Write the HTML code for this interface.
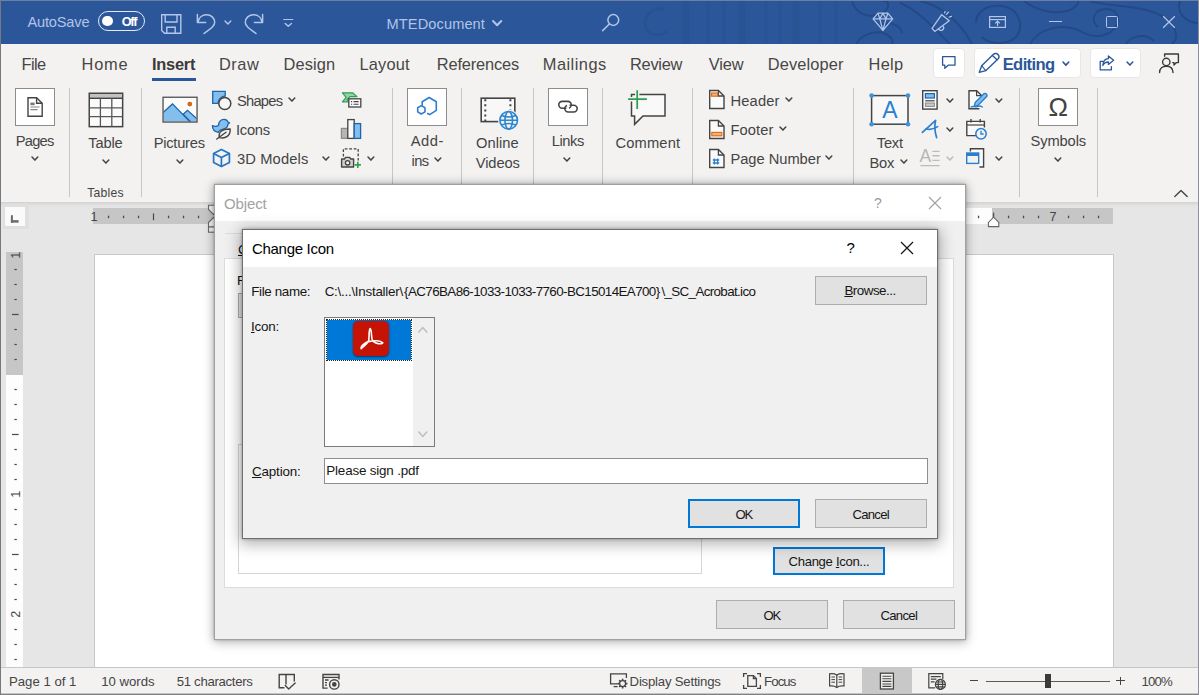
<!DOCTYPE html>
<html lang="en"><head><meta charset="utf-8"><title>MTEDocument - Word</title>
<style>
html,body{margin:0;padding:0;}
body{width:1199px;height:695px;overflow:hidden;position:relative;background:#e6e6e6;font-family:"Liberation Sans", sans-serif;}
#w{position:absolute;left:0;top:0;width:1199px;height:695px;overflow:hidden;}
#w div,#w span,#w svg{position:absolute;box-sizing:border-box;}
#w span{white-space:pre;line-height:1;}
#w svg{overflow:visible;}
u{text-decoration:underline;text-underline-offset:1px;}
</style></head>
<body><div id="w">
<div style="left:0px;top:0px;width:1199px;height:695px;background:#e6e6e6;"></div>
<div style="left:0px;top:0px;width:1199px;height:44px;background:#2b579a;"></div>
<div style="left:0px;top:44px;width:1199px;height:158px;background:#f3f2f1;"></div>
<div style="left:0px;top:202px;width:1199px;height:6px;background:linear-gradient(#d2d2d2,#e1e1e1 50%,#e6e6e6);"></div>
<svg style="left:620px;top:1px;overflow:hidden;" width="579" height="43" viewBox="0 0 579 43"><g fill="none" stroke="#254e8c" stroke-width="2.4" opacity="0.6">
<path d="M44 8 C30 6 22 18 26 27 C30 36 42 35 47 30"/>
</g>
<g fill="none" stroke="#254e8c" opacity="0.38">
<path d="M66 0 V43 M122 0 V43 M176 0 V43" stroke-width="7"/>
<path d="M88 0 V43 M104 0 V43 M146 0 V43 M160 0 V43 M200 0 V43 M216 0 V43" stroke-width="3"/>
</g>
<g fill="none" stroke="#234a86" stroke-width="2" opacity="0.95">
<path d="M232 0 C236 14 250 18 262 12 C272 6 268 -2 262 0"/>
<path d="M236 43 C244 30 262 28 270 36 C276 42 270 46 266 43"/>
<path d="M280 2 C300 10 316 30 330 43"/>
<path d="M300 0 C320 4 340 20 352 43"/>
<path d="M356 22 C356 8 372 2 386 6 C400 10 404 26 396 36 C388 44 370 44 362 36"/>
<path d="M404 0 C420 12 440 14 452 8 C462 2 458 -4 450 0"/>
<path d="M410 43 C420 26 444 22 460 30 C474 38 486 36 494 28 C502 20 498 8 486 8 C474 8 470 20 478 26"/>
<path d="M470 0 C490 6 520 4 540 14 C556 22 560 36 552 43"/>
<path d="M506 43 C512 34 526 32 534 40"/>
<path d="M560 0 C556 12 566 22 579 22"/>
<path d="M262 24 C270 20 280 24 282 32"/>
</g></svg>
<span id="t1" style="left:27.40px;top:15.00px;font-size:14.6px;color:#b1c4e7;font-weight:400;letter-spacing:-0.167px;">AutoSave</span>
<div style="left:98px;top:11px;width:47px;height:20px;border:1.6px solid #e4eaf5;border-radius:10px;"></div>
<div style="left:102.4px;top:15.6px;width:10.599999999999994px;height:10.4px;background:#fff;border-radius:50%;"></div>
<span id="t2" style="left:121.70px;top:16.00px;font-size:12.7px;color:#fff;font-weight:700;letter-spacing:-1.300px;">Off</span>
<svg style="left:160px;top:13px;" width="22" height="22" viewBox="0 0 22 22"><g fill="none" stroke="#b3c6e9" stroke-width="1.4" stroke-linejoin="miter"><path d="M1.7 1.7 H17 L20.8 1.7 V20.3 H4.5 L1.7 17.5 Z"/><path d="M5.2 1.7 V9 H17 V1.7"/><path d="M6.8 20.3 V14.2 H15.2 V20.3"/></g></svg>
<svg style="left:196px;top:13px;" width="20" height="22" viewBox="0 0 20 22"><g fill="none" stroke="#b3c6e9" stroke-width="1.5" stroke-linecap="round" stroke-linejoin="round"><path d="M1.4 1.6 V9.4 H9.6"/><path d="M2 9.2 C2.6 4.6 6.2 1.7 10.5 1.7 C15 1.7 18.7 5 18.7 9.3 C18.7 12.8 15.5 15 8 20.5"/></g></svg>
<svg style="left:222.5px;top:18.65px;" width="9.8" height="7.1" viewBox="0 0 9.8 7.1"><path d="M2 2 L4.9 5.1 L7.8 2" fill="none" stroke="#b3c6e9" stroke-width="1.4" stroke-linecap="round" stroke-linejoin="round"/></svg>
<svg style="left:244px;top:13px;" width="20" height="22" viewBox="0 0 20 22"><g fill="none" stroke="#b3c6e9" stroke-width="1.5" stroke-linecap="round" stroke-linejoin="round" transform="translate(20,0) scale(-1,1)"><path d="M1.4 1.6 V9.4 H9.6"/><path d="M2 9.2 C2.6 4.6 6.2 1.7 10.5 1.7 C15 1.7 18.7 5 18.7 9.3 C18.7 12.8 15.5 15 8 20.5"/></g></svg>
<svg style="left:282px;top:17px;" width="13" height="11" viewBox="0 0 13 11"><g fill="none" stroke="#b3c6e9" stroke-linecap="round" stroke-linejoin="round"><path d="M1.8 2.5 H10.8" stroke-width="1.2"/><path d="M3.2 6.4 L6.3 9.3 L9.4 6.4" stroke-width="1.4"/></g></svg>
<span id="t3" style="left:386.60px;top:17.00px;font-size:14.6px;color:#b1c4e7;font-weight:400;letter-spacing:0.094px;">MTEDocument</span>
<svg style="left:491.25px;top:18.8px;" width="12.3" height="8.2" viewBox="0 0 12.3 8.2"><path d="M2 2 L6.15 6.2 L10.3 2" fill="none" stroke="#b3c6e9" stroke-width="2" stroke-linecap="round" stroke-linejoin="round"/></svg>
<svg style="left:601px;top:13px;" width="20" height="19" viewBox="0 0 20 19"><g fill="none" stroke="#b3c6e9" stroke-width="1.5" stroke-linecap="round"><circle cx="12.3" cy="7" r="5.4"/><path d="M8.4 11 L1.6 17.6"/></g></svg>
<svg style="left:872px;top:12px;" width="22" height="20" viewBox="0 0 22 20"><g fill="none" stroke="#b3c6e9" stroke-width="1.25" stroke-linejoin="round"><path d="M6 1.2 H15.8 L20.7 6.9 L10.9 18.4 L1.1 6.9 Z"/><path d="M1.1 6.9 H20.7"/><path d="M6 1.2 L7.8 6.9 L10.9 18.4 L14 6.9 L15.8 1.2"/><path d="M7.8 6.9 L10.9 1.2 L14 6.9"/></g></svg>
<svg style="left:930px;top:10px;" width="23" height="23" viewBox="0 0 23 23"><g fill="none" stroke="#b3c6e9" stroke-width="1.3" stroke-linecap="round" stroke-linejoin="round"><path d="M2.1 18.3 L11.7 4.7 L19.2 10.7 L4.8 21.4 Z"/><path d="M8.6 18.9 A2.5 2.5 0 0 0 13.4 16.6"/><path d="M16.5 4.4 L18.4 2.2"/><path d="M19.3 7.1 L21.4 6.3"/><path d="M14.6 2.9 L15.1 1.6"/></g></svg>
<svg style="left:988px;top:15px;" width="19" height="14" viewBox="0 0 19 14"><g fill="none" stroke="#b3c6e9" stroke-width="1.2" stroke-linejoin="miter"><rect x="1.6" y="1.6" width="15.8" height="10.8"/><path d="M1.6 4.6 H17.4"/><path d="M9.5 11 V6.4 M7.2 8.4 L9.5 6.2 L11.8 8.4"/></g></svg>
<div style="left:1049px;top:21px;width:12.5px;height:1.3000000000000007px;background:#b3c6e9;"></div>
<div style="left:1106.3px;top:16.4px;width:11.700000000000045px;height:11.8px;border:1.3px solid #b3c6e9;border-radius:1.5px;"></div>
<svg style="left:1162px;top:15px;" width="14" height="14" viewBox="0 0 14 14"><path d="M1.2 1.2 L12.8 12.8 M12.8 1.2 L1.2 12.8" stroke="#b3c6e9" stroke-width="1.3" fill="none"/></svg>
<span id="t4" style="left:21.50px;top:56.00px;font-size:16.4px;color:#484644;font-weight:400;letter-spacing:-0.598px;">File</span>
<span id="t5" style="left:81.50px;top:56.00px;font-size:16.4px;color:#484644;font-weight:400;letter-spacing:0.798px;">Home</span>
<span id="t6" style="left:152.00px;top:56.00px;font-size:16.4px;color:#3b3a39;font-weight:700;letter-spacing:-0.235px;">Insert</span>
<div style="left:152px;top:78px;width:44px;height:3px;background:#2b579a;"></div>
<span id="t7" style="left:219.00px;top:56.00px;font-size:16.4px;color:#484644;font-weight:400;letter-spacing:0.530px;">Draw</span>
<span id="t8" style="left:283.60px;top:56.00px;font-size:16.4px;color:#484644;font-weight:400;letter-spacing:0.099px;">Design</span>
<span id="t9" style="left:359.60px;top:56.00px;font-size:16.4px;color:#484644;font-weight:400;letter-spacing:0.148px;">Layout</span>
<span id="t10" style="left:436.80px;top:56.00px;font-size:16.4px;color:#484644;font-weight:400;letter-spacing:-0.158px;">References</span>
<span id="t11" style="left:542.80px;top:56.00px;font-size:16.4px;color:#484644;font-weight:400;letter-spacing:0.468px;">Mailings</span>
<span id="t12" style="left:630.00px;top:56.00px;font-size:16.4px;color:#484644;font-weight:400;letter-spacing:-0.281px;">Review</span>
<span id="t13" style="left:708.70px;top:56.00px;font-size:16.4px;color:#484644;font-weight:400;letter-spacing:-0.131px;">View</span>
<span id="t14" style="left:767.70px;top:56.00px;font-size:16.4px;color:#484644;font-weight:400;letter-spacing:0.131px;">Developer</span>
<span id="t15" style="left:868.50px;top:56.00px;font-size:16.4px;color:#484644;font-weight:400;letter-spacing:0.302px;">Help</span>
<div style="left:934px;top:49px;width:30px;height:28px;background:#fff;border-radius:3.5px;box-shadow:0 0 0 1px rgba(0,0,0,0.045);"></div>
<div style="left:975px;top:49px;width:105px;height:28px;background:#fff;border-radius:3.5px;box-shadow:0 0 0 1px rgba(0,0,0,0.045);"></div>
<div style="left:1090.5px;top:49px;width:49.5px;height:28px;background:#fff;border-radius:3.5px;box-shadow:0 0 0 1px rgba(0,0,0,0.045);"></div>
<svg style="left:941px;top:55px;" width="16" height="15" viewBox="0 0 16 15"><path d="M1.6 1.6 H14 V10.2 H7.2 L3.8 13.2 V10.2 H1.6 Z" fill="none" stroke="#2b579a" stroke-width="1.3" stroke-linejoin="round"/></svg>
<svg style="left:977px;top:52px;" width="24" height="22" viewBox="0 0 24 22"><g fill="none" stroke="#2b579a" stroke-width="1.35" stroke-linejoin="round" stroke-linecap="round"><path d="M4.7 13.7 L16.2 2.4 C17.6 1.1 19.8 1.2 21 2.5 C22.2 3.8 22.3 5.6 21.2 6.8 L8.7 18.7 L2.3 20.3 Z"/><path d="M15.4 3.4 L20 7.8"/><path d="M4.7 13.7 L8.7 18.7" stroke-width="1.1"/></g></svg>
<span id="t16" style="left:1002.70px;top:57.00px;font-size:16.6px;color:#2b579a;font-weight:700;letter-spacing:-0.631px;">Editing</span>
<svg style="left:1060.6px;top:60.45px;" width="9.8" height="7.1" viewBox="0 0 9.8 7.1"><path d="M2 2 L4.9 5.1 L7.8 2" fill="none" stroke="#2b579a" stroke-width="1.6" stroke-linecap="round" stroke-linejoin="round"/></svg>
<svg style="left:1098px;top:54px;" width="18" height="18" viewBox="0 0 18 18"><g fill="none" stroke="#2b579a" stroke-width="1.3" stroke-linejoin="round" stroke-linecap="round"><path d="M5 7.4 H2.2 V15.8 H13.4 V12.6"/><path d="M10.4 2 L15.6 6.2 L10.4 10.4 V8 C7.6 8 5.8 9.4 4.8 11.6 C5 7.6 7 4.8 10.4 4.6 Z"/></g></svg>
<svg style="left:1125.1px;top:60.45px;" width="9.8" height="7.1" viewBox="0 0 9.8 7.1"><path d="M2 2 L4.9 5.1 L7.8 2" fill="none" stroke="#2b579a" stroke-width="1.5" stroke-linecap="round" stroke-linejoin="round"/></svg>
<svg style="left:1158px;top:52px;" width="23" height="23" viewBox="0 0 23 23"><g fill="none" stroke="#3b3a39" stroke-width="1.4" stroke-linejoin="round" stroke-linecap="round"><circle cx="8.3" cy="10" r="3.7"/><path d="M1.6 20.6 C1.6 16.2 4.4 14.2 8.3 14.2 C12.2 14.2 15 16.2 15 20.6"/><path d="M6.6 4.2 V2 H20.4 V10.6 H18.4 L16 13 V10.6 H14.8"/></g></svg>
<div style="left:69.0px;top:88px;width:1.0px;height:109px;background:#c8c6c4;"></div>
<div style="left:141.0px;top:88px;width:1.0px;height:109px;background:#c8c6c4;"></div>
<div style="left:392.2px;top:88px;width:1.0px;height:109px;background:#c8c6c4;"></div>
<div style="left:461.1px;top:88px;width:1.0px;height:109px;background:#c8c6c4;"></div>
<div style="left:533.0px;top:88px;width:1.0px;height:109px;background:#c8c6c4;"></div>
<div style="left:601.9px;top:88px;width:1.0px;height:109px;background:#c8c6c4;"></div>
<div style="left:692.0px;top:88px;width:1.0px;height:109px;background:#c8c6c4;"></div>
<div style="left:852.8px;top:88px;width:1.0px;height:109px;background:#c8c6c4;"></div>
<div style="left:1019.2px;top:88px;width:1.0px;height:109px;background:#c8c6c4;"></div>
<div style="left:1097.0px;top:88px;width:1.0px;height:109px;background:#c8c6c4;"></div>
<div style="left:15px;top:88px;width:40px;height:38px;background:#fff;border:1px solid #8c8c8c;"></div>
<svg style="left:26px;top:96px;" width="18" height="22" viewBox="0 0 18 22"><g fill="none" stroke="#444" stroke-width="1.4" stroke-linejoin="miter"><path d="M2 1.7 H10.6 L16.2 7.2 V20.3 H2 Z"/><path d="M10.6 1.7 V7.2 H16.2"/></g><rect x="4.4" y="6.6" width="4.2" height="2.6" fill="#777"/><path d="M4.4 11 H13.6 M4.4 13.6 H11.6" stroke="#888" stroke-width="1.2"/></svg>
<span id="t17" style="left:15.80px;top:134.00px;font-size:14.7px;color:#444;font-weight:400;letter-spacing:-0.775px;">Pages</span>
<svg style="left:29.5px;top:155.45px;" width="9.8" height="7.1" viewBox="0 0 9.8 7.1"><path d="M2 2 L4.9 5.1 L7.8 2" fill="none" stroke="#444" stroke-width="1.5" stroke-linecap="round" stroke-linejoin="round"/></svg>
<svg style="left:88px;top:92px;" width="37" height="36" viewBox="0 0 37 36"><rect x="1.25" y="1.25" width="33.4" height="33.4" fill="#fbfbfb" stroke="#444" stroke-width="1.5"/><rect x="2" y="2" width="31.9" height="3.6" fill="#c2c2c2"/><path d="M1.2 6.2 H34.6" stroke="#444" stroke-width="1.4"/><path d="M12.4 6.2 V34.6 M23.8 6.2 V34.6 M1.2 15.9 H34.6 M1.2 24.6 H34.6" stroke="#585858" stroke-width="1.3"/></svg>
<span id="t18" style="left:88.30px;top:136.00px;font-size:14.7px;color:#444;font-weight:400;letter-spacing:-0.161px;">Table</span>
<svg style="left:100.6px;top:158.05px;" width="9.8" height="7.1" viewBox="0 0 9.8 7.1"><path d="M2 2 L4.9 5.1 L7.8 2" fill="none" stroke="#444" stroke-width="1.5" stroke-linecap="round" stroke-linejoin="round"/></svg>
<span id="t19" style="left:87.30px;top:187.00px;font-size:12.2px;color:#444;font-weight:400;letter-spacing:0.213px;">Tables</span>
<svg style="left:162px;top:95.5px;" width="36" height="28" viewBox="0 0 36 28"><defs><clipPath id="pc"><rect x="1.6" y="1.8" width="32.9" height="23.7"/></clipPath></defs><rect x="1.05" y="1.25" width="34" height="24.8" fill="#fbfbfb"/><g clip-path="url(#pc)"><path d="M0 17.5 L10.5 7.9 L29 26.8 H0 Z" fill="#83beec" stroke="#1d66ad" stroke-width="1.3"/><path d="M21.2 18.2 L25.5 14.3 L36 23.8 V27 H29.8 Z" fill="#83beec" stroke="#1d66ad" stroke-width="1.3"/></g><circle cx="27.8" cy="8.1" r="2.4" fill="#d9670f"/><rect x="1.05" y="1.25" width="34" height="24.8" fill="none" stroke="#505050" stroke-width="1.3"/></svg>
<span id="t20" style="left:153.70px;top:136.00px;font-size:14.7px;color:#444;font-weight:400;letter-spacing:-0.245px;">Pictures</span>
<svg style="left:174.6px;top:158.05px;" width="9.8" height="7.1" viewBox="0 0 9.8 7.1"><path d="M2 2 L4.9 5.1 L7.8 2" fill="none" stroke="#444" stroke-width="1.5" stroke-linecap="round" stroke-linejoin="round"/></svg>
<svg style="left:211px;top:89.5px;" width="23" height="22" viewBox="0 0 23 22"><path d="M1.7 1.3 H14.2 V6 C9.5 6.6 7 10 7.2 13.4 H1.7 Z" fill="#83beec" stroke="#1d66ad" stroke-width="1.3"/><circle cx="13.8" cy="13.5" r="6" fill="#f6f5f4" stroke="#444" stroke-width="1.5"/></svg>
<span id="t21" style="left:236.90px;top:94.00px;font-size:14.7px;color:#444;font-weight:400;letter-spacing:-0.734px;">Shapes</span>
<svg style="left:286.6px;top:95.85px;" width="9.8" height="7.1" viewBox="0 0 9.8 7.1"><path d="M2 2 L4.9 5.1 L7.8 2" fill="none" stroke="#444" stroke-width="1.5" stroke-linecap="round" stroke-linejoin="round"/></svg>
<svg style="left:211px;top:118px;" width="20" height="22" viewBox="0 0 20 22"><path d="M1.4 7.6 C3.6 8.6 6 8.4 7.6 7.2 C7.6 3.6 10 1.2 13.2 1.4 C15.2 1.6 16.6 2.6 17 4.2 L18.6 4.8 L17 6.2 C16.8 8.6 15.4 10 13.6 10.6 C10.4 11.2 8.2 12.4 7.2 14.4 C3.4 13.8 1.4 11 1.4 7.6 Z" fill="#83beec" stroke="#1d66ad" stroke-width="1.3" stroke-linejoin="round"/><path d="M8.4 19.6 C7 14.2 11 10.8 19.2 11 C19.6 17.6 14.6 21.2 8.4 19.6 Z" fill="#f3f2f1" stroke="#444" stroke-width="1.4" stroke-linejoin="round"/><path d="M5.8 21 L15 14.2" stroke="#444" stroke-width="1.4" stroke-linecap="round"/></svg>
<span id="t22" style="left:236.00px;top:123.00px;font-size:14.7px;color:#444;font-weight:400;letter-spacing:-0.240px;">Icons</span>
<svg style="left:212px;top:148px;" width="19" height="20" viewBox="0 0 19 20"><g fill="none" stroke="#2376c4" stroke-width="1.7" stroke-linejoin="round"><path d="M9.4 1.4 L17.4 5.4 V14.4 L9.4 18.6 L1.6 14.4 V5.4 Z"/><path d="M1.6 5.4 L9.4 9.6 L17.4 5.4 M9.4 9.6 V18.6"/></g></svg>
<span id="t23" style="left:236.90px;top:152.00px;font-size:14.7px;color:#444;font-weight:400;letter-spacing:0.155px;">3D Models</span>
<svg style="left:320.6px;top:154.85px;" width="9.8" height="7.1" viewBox="0 0 9.8 7.1"><path d="M2 2 L4.9 5.1 L7.8 2" fill="none" stroke="#444" stroke-width="1.5" stroke-linecap="round" stroke-linejoin="round"/></svg>
<svg style="left:340px;top:91px;" width="23" height="18" viewBox="0 0 23 18"><path d="M2.4 1.8 H12.6 L17 5.6 H9.8 L7 8.6 L9.2 10.8 H2.4 L6.2 6.3 Z" fill="#93d6a6" stroke="#2f9e55" stroke-width="1.2" stroke-linejoin="round"/><rect x="8.8" y="7.8" width="12" height="8.2" fill="#fafafa" stroke="#444" stroke-width="1.3"/><path d="M11 10.6 H12.2 M13.6 10.6 H18.6 M11 13.2 H12.2 M13.6 13.2 H18.6" stroke="#444" stroke-width="1.1"/></svg>
<svg style="left:340px;top:118px;" width="23" height="22" viewBox="0 0 23 22"><rect x="1.4" y="10.4" width="6.4" height="10" fill="#b5b5b5" stroke="#8a8a8a" stroke-width="1.2"/><rect x="7.8" y="1.6" width="6.4" height="18.8" fill="#fafafa" stroke="#444" stroke-width="1.3"/><rect x="14.2" y="5.6" width="6.4" height="14.8" fill="#83beec" stroke="#1d66ad" stroke-width="1.3"/></svg>
<svg style="left:340px;top:147px;" width="22" height="22" viewBox="0 0 22 22"><path d="M3.4 9.6 V1.9 H18.2 V13.6" fill="none" stroke="#444" stroke-width="1.3" stroke-dasharray="2.8 1.7"/><path d="M1.6 12 H4.4 L5.6 10.4 H9.6 L10.8 12 H13.6 V20 H1.6 Z" fill="#cfcfcf" stroke="#444" stroke-width="1.4" stroke-linejoin="round"/><circle cx="7.6" cy="15.8" r="2.2" fill="#f3f2f1" stroke="#444" stroke-width="1.3"/><path d="M17.8 14.8 V21 M14.7 17.9 H20.9" stroke="#2f9e4e" stroke-width="1.6"/></svg>
<svg style="left:365.6px;top:154.85px;" width="9.8" height="7.1" viewBox="0 0 9.8 7.1"><path d="M2 2 L4.9 5.1 L7.8 2" fill="none" stroke="#444" stroke-width="1.5" stroke-linecap="round" stroke-linejoin="round"/></svg>
<div style="left:407px;top:88px;width:40px;height:38px;background:#fff;border:1px solid #8c8c8c;"></div>
<svg style="left:416px;top:96px;" width="22" height="22" viewBox="0 0 22 22"><g fill="none" stroke="#2b7cd3" stroke-width="1.6" stroke-linejoin="round" stroke-linecap="round"><path d="M6.2 9.2 V5.7 L13.2 1.5 L20.3 5.7 V14.3 L13.7 18.6 L11.6 17.5"/><path d="M5.3 9.6 L9 11.7 V15.9 L5.3 18 L1.7 15.9 V11.7 Z"/></g></svg>
<span id="t24" style="left:410.70px;top:134.00px;font-size:14.7px;color:#444;font-weight:400;letter-spacing:0.589px;">Add-</span>
<span id="t25" style="left:411.60px;top:154.00px;font-size:14.7px;color:#444;font-weight:400;letter-spacing:-0.666px;">ins</span>
<svg style="left:432.6px;top:155.75px;" width="9.8" height="7.1" viewBox="0 0 9.8 7.1"><path d="M2 2 L4.9 5.1 L7.8 2" fill="none" stroke="#444" stroke-width="1.5" stroke-linecap="round" stroke-linejoin="round"/></svg>
<svg style="left:479px;top:96px;" width="40" height="35" viewBox="0 0 40 35"><rect x="2.2" y="2.2" width="33.6" height="23.4" fill="#f8f8f8" stroke="#444" stroke-width="1.6"/><path d="M6.3 3.2 V25" stroke="#444" stroke-width="2" stroke-dasharray="2 3.1"/><path d="M31.4 3.2 V25" stroke="#444" stroke-width="2" stroke-dasharray="2 3.1"/><circle cx="29.7" cy="24.3" r="10.6" fill="#f3f2f1"/><g fill="none" stroke="#2b86d2" stroke-width="1.6"><circle cx="29.7" cy="24.3" r="8.8"/><ellipse cx="29.7" cy="24.3" rx="3.8" ry="8.8"/><path d="M21 24.3 H38.4 M22.6 19.6 C27 21.4 32.4 21.4 36.8 19.6 M22.6 29 C27 27.2 32.4 27.2 36.8 29"/></g></svg>
<span id="t26" style="left:476.00px;top:136.00px;font-size:14.7px;color:#444;font-weight:400;letter-spacing:0.062px;">Online</span>
<span id="t27" style="left:475.80px;top:156.00px;font-size:14.7px;color:#444;font-weight:400;letter-spacing:-0.120px;">Videos</span>
<div style="left:548px;top:88px;width:40px;height:38px;background:#fff;border:1px solid #8c8c8c;"></div>
<svg style="left:557px;top:99px;" width="22" height="15" viewBox="0 0 22 15"><g fill="none" stroke="#444" stroke-width="1.6"><rect x="1.8" y="2.4" width="12.4" height="6.8" rx="3.4"/><rect x="7.8" y="6.2" width="12.4" height="6.8" rx="3.4"/></g><path d="M9.4 9.2 H12" stroke="#fff" stroke-width="2.2"/><path d="M10 6.2 H12.6" stroke="#fff" stroke-width="2.2"/></svg>
<span id="t28" style="left:551.80px;top:134.00px;font-size:14.7px;color:#444;font-weight:400;letter-spacing:-0.436px;">Links</span>
<svg style="left:562.1px;top:155.75px;" width="9.8" height="7.1" viewBox="0 0 9.8 7.1"><path d="M2 2 L4.9 5.1 L7.8 2" fill="none" stroke="#444" stroke-width="1.5" stroke-linecap="round" stroke-linejoin="round"/></svg>
<svg style="left:626px;top:89px;" width="41" height="38" viewBox="0 0 41 38"><path d="M5.5 5.5 H39 V27 H17 L8.6 35.4 V27 H5.5 Z" fill="#f9f9f9" stroke="#444" stroke-width="1.5" stroke-linejoin="miter"/><path d="M11.2 1 V20.2 M1.9 10.2 H21.1" stroke="#f3f2f1" stroke-width="4.4"/><path d="M11.2 1.2 V20 M2.1 10.2 H20.9" stroke="#2f9e4e" stroke-width="1.7"/></svg>
<span id="t29" style="left:615.50px;top:136.00px;font-size:14.7px;color:#444;font-weight:400;letter-spacing:0.153px;">Comment</span>
<svg style="left:708px;top:89.4px;" width="18" height="22" viewBox="0 0 18 22"><path d="M1.7 1.5 H10.4 L16 7 V19.5 H1.7 Z" fill="#fafafa" stroke="#444" stroke-width="1.4"/><path d="M10.4 1.5 V7 H16" fill="none" stroke="#444" stroke-width="1.3"/><rect x="3.6" y="4" width="6" height="3.2" fill="#f4b183" stroke="#e0700f" stroke-width="1.2"/></svg>
<span id="t30" style="left:730.40px;top:94.00px;font-size:14.7px;color:#444;font-weight:400;letter-spacing:0.184px;">Header</span>
<svg style="left:783.5px;top:96.35px;" width="9.8" height="7.1" viewBox="0 0 9.8 7.1"><path d="M2 2 L4.9 5.1 L7.8 2" fill="none" stroke="#444" stroke-width="1.5" stroke-linecap="round" stroke-linejoin="round"/></svg>
<svg style="left:708px;top:118.5px;" width="18" height="22" viewBox="0 0 18 22"><path d="M1.7 1.5 H10.4 L16 7 V19.5 H1.7 Z" fill="#fafafa" stroke="#444" stroke-width="1.4"/><path d="M10.4 1.5 V7 H16" fill="none" stroke="#444" stroke-width="1.3"/><rect x="3.8" y="13.4" width="10" height="3.4" fill="#f4b183" stroke="#e0700f" stroke-width="1.2"/></svg>
<span id="t31" style="left:730.40px;top:123.00px;font-size:14.7px;color:#444;font-weight:400;letter-spacing:0.128px;">Footer</span>
<svg style="left:777.8px;top:125.35px;" width="9.8" height="7.1" viewBox="0 0 9.8 7.1"><path d="M2 2 L4.9 5.1 L7.8 2" fill="none" stroke="#444" stroke-width="1.5" stroke-linecap="round" stroke-linejoin="round"/></svg>
<svg style="left:708px;top:147.7px;" width="18" height="22" viewBox="0 0 18 22"><path d="M1.7 1.5 H10.4 L16 7 V19.5 H1.7 Z" fill="#fafafa" stroke="#444" stroke-width="1.4"/><path d="M10.4 1.5 V7 H16" fill="none" stroke="#444" stroke-width="1.3"/><path d="M6.4 10.4 V16.6 M9.6 10.4 V16.6 M4.8 12 H11.2 M4.8 15 H11.2" stroke="#2a80cf" stroke-width="1.3"/></svg>
<span id="t32" style="left:730.40px;top:152.00px;font-size:14.7px;color:#444;font-weight:400;letter-spacing:-0.023px;">Page Number</span>
<svg style="left:824.4px;top:154.15px;" width="9.8" height="7.1" viewBox="0 0 9.8 7.1"><path d="M2 2 L4.9 5.1 L7.8 2" fill="none" stroke="#444" stroke-width="1.5" stroke-linecap="round" stroke-linejoin="round"/></svg>
<svg style="left:869px;top:92.5px;" width="42" height="34" viewBox="0 0 42 34"><rect x="2.6" y="2.6" width="36.4" height="28.6" fill="#f8f8f8" stroke="#444" stroke-width="1.5"/><g fill="#3a94dc"><circle cx="2.6" cy="2.6" r="2.3"/><circle cx="39" cy="2.6" r="2.3"/><circle cx="2.6" cy="31.2" r="2.3"/><circle cx="39" cy="31.2" r="2.3"/></g><text x="20.8" y="25.4" text-anchor="middle" font-family="Liberation Sans, sans-serif" font-size="23" fill="#2a80cf">A</text></svg>
<span id="t33" style="left:876.80px;top:136.00px;font-size:14.7px;color:#444;font-weight:400;letter-spacing:-0.218px;">Text</span>
<span id="t34" style="left:869.40px;top:156.00px;font-size:14.7px;color:#444;font-weight:400;letter-spacing:-0.182px;">Box</span>
<svg style="left:898.5px;top:158.05px;" width="9.8" height="7.1" viewBox="0 0 9.8 7.1"><path d="M2 2 L4.9 5.1 L7.8 2" fill="none" stroke="#444" stroke-width="1.5" stroke-linecap="round" stroke-linejoin="round"/></svg>
<svg style="left:921px;top:89px;" width="18" height="22" viewBox="0 0 18 22"><rect x="1.7" y="1.7" width="14.4" height="18.4" fill="#fafafa" stroke="#444" stroke-width="1.4"/><rect x="4.4" y="4.6" width="9" height="4.4" fill="#83beec" stroke="#1d66ad" stroke-width="1.2"/><path d="M4.2 11.8 H13.6" stroke="#444" stroke-width="1.2"/><rect x="4.4" y="14" width="9" height="3.4" fill="#c8c8c8" stroke="#8a8a8a" stroke-width="1"/></svg>
<svg style="left:944.5px;top:96.65px;" width="9.8" height="7.1" viewBox="0 0 9.8 7.1"><path d="M2 2 L4.9 5.1 L7.8 2" fill="none" stroke="#444" stroke-width="1.5" stroke-linecap="round" stroke-linejoin="round"/></svg>
<svg style="left:920px;top:118px;" width="22" height="22" viewBox="0 0 22 22"><g fill="none" stroke="#2a80cf" stroke-width="1.7" stroke-linecap="round" stroke-linejoin="round"><path d="M2.4 14.4 L15.6 2.4 C14.4 8 14.8 14 16.6 19.6"/><path d="M6.2 10.8 C9.6 12.2 13.4 11.2 17.6 8.6"/></g></svg>
<svg style="left:944.5px;top:125.65px;" width="9.8" height="7.1" viewBox="0 0 9.8 7.1"><path d="M2 2 L4.9 5.1 L7.8 2" fill="none" stroke="#444" stroke-width="1.5" stroke-linecap="round" stroke-linejoin="round"/></svg>
<svg style="left:919px;top:147px;" width="23" height="21" viewBox="0 0 23 21"><text x="0.4" y="14.6" font-family="Liberation Sans, sans-serif" font-size="17.5" fill="#b8b6b4">A</text><path d="M13.4 4.4 H20.6 M13.4 8.8 H20.6 M13.4 13.4 H20.6 M1.4 18.6 H20.6" stroke="#bebcba" stroke-width="1.4"/></svg>
<svg style="left:944.5px;top:154.55px;" width="9.8" height="7.1" viewBox="0 0 9.8 7.1"><path d="M2 2 L4.9 5.1 L7.8 2" fill="none" stroke="#bcbab8" stroke-width="1.5" stroke-linecap="round" stroke-linejoin="round"/></svg>
<svg style="left:966px;top:88.5px;" width="23" height="23" viewBox="0 0 23 23"><path d="M13.4 19.8 H3 V1.8 H10.6 L15.6 6.6 V8" fill="#fafafa" stroke="#444" stroke-width="1.4" stroke-linejoin="miter"/><path d="M10.6 1.8 V6.6 H15.6" fill="none" stroke="#444" stroke-width="1.2"/><path d="M17.4 5.2 C18.2 4.2 19.6 4.2 20.4 5 C21.2 5.8 21.2 7 20.4 7.8 L11.8 16.4 L8.2 17.4 L9.2 13.6 Z" fill="#83beec" stroke="#2a80cf" stroke-width="1.4" stroke-linejoin="round"/><path d="M5.2 18 C7 16.6 9 18.6 11 17.6 S14.6 17 16.4 18" fill="none" stroke="#2a80cf" stroke-width="1.4" stroke-linecap="round"/></svg>
<svg style="left:993.7px;top:96.65px;" width="9.8" height="7.1" viewBox="0 0 9.8 7.1"><path d="M2 2 L4.9 5.1 L7.8 2" fill="none" stroke="#444" stroke-width="1.5" stroke-linecap="round" stroke-linejoin="round"/></svg>
<svg style="left:965px;top:118px;" width="23" height="23" viewBox="0 0 23 23"><path d="M13 17.6 H1.8 V3.4 H19.4 V9.6" fill="#fafafa" stroke="#444" stroke-width="1.4" stroke-linejoin="miter"/><path d="M1.8 7 H19.4" stroke="#444" stroke-width="1.2"/><path d="M6 1 V4.6 M15.2 1 V4.6" stroke="#444" stroke-width="1.4"/><circle cx="16" cy="15.8" r="5.2" fill="#f3f2f1" stroke="#2a80cf" stroke-width="1.5"/><path d="M16 12.8 V16 H18.6" fill="none" stroke="#2a80cf" stroke-width="1.3"/></svg>
<svg style="left:965px;top:146.5px;" width="21" height="22" viewBox="0 0 21 22"><path d="M5.4 4.6 V1.8 H18.6 V20 H14.4" fill="#fafafa" stroke="#444" stroke-width="1.4" stroke-linejoin="miter"/><rect x="1.7" y="6" width="12" height="10.4" fill="#f3f2f1" stroke="#2a80cf" stroke-width="1.4"/><rect x="1.7" y="6" width="12" height="3" fill="#2a80cf"/></svg>
<svg style="left:993.7px;top:154.55px;" width="9.8" height="7.1" viewBox="0 0 9.8 7.1"><path d="M2 2 L4.9 5.1 L7.8 2" fill="none" stroke="#444" stroke-width="1.5" stroke-linecap="round" stroke-linejoin="round"/></svg>
<div style="left:1038px;top:88px;width:40px;height:38px;background:#fff;border:1px solid #8c8c8c;"></div>
<svg style="left:1046px;top:96px;" width="24" height="22" viewBox="0 0 24 22"><text x="12.1" y="19.7" text-anchor="middle" font-family="Liberation Sans, sans-serif" font-size="26" fill="#444">Ω</text></svg>
<span id="t35" style="left:1030.50px;top:134.00px;font-size:14.7px;color:#444;font-weight:400;letter-spacing:-0.113px;">Symbols</span>
<svg style="left:1052.5px;top:155.75px;" width="9.8" height="7.1" viewBox="0 0 9.8 7.1"><path d="M2 2 L4.9 5.1 L7.8 2" fill="none" stroke="#444" stroke-width="1.5" stroke-linecap="round" stroke-linejoin="round"/></svg>
<svg style="left:1173px;top:189px;" width="16" height="9" viewBox="0 0 16 9"><path d="M1.8 7.4 L8 1.6 L14.2 7.4" fill="none" stroke="#444" stroke-width="1.4" stroke-linecap="round" stroke-linejoin="round"/></svg>
<div style="left:3px;top:204px;width:26px;height:25px;background:#dfdfdf;"></div>
<div style="left:5px;top:207px;width:20px;height:19px;background:#fafafa;"></div>
<svg style="left:10px;top:214px;" width="10" height="10" viewBox="0 0 10 10"><path d="M1.9 1.2 V8.6" fill="none" stroke="#6a6a6a" stroke-width="2"/><path d="M0.9 7.4 H8.6" fill="none" stroke="#6a6a6a" stroke-width="2.5"/></svg>
<div style="left:93px;top:208px;width:1020px;height:15.5px;background:#c6c6c6;"></div>
<div style="left:214px;top:208px;width:777.5px;height:15.5px;background:#fdfdfd;"></div>
<svg style="left:0px;top:208px;" width="1199" height="16" viewBox="0 0 1199 16"><g fill="#4a4a4a"><rect x="107.9" y="7.7" width="1.3" height="2.5"/><rect x="122.9" y="7.7" width="1.3" height="2.5"/><rect x="137.9" y="7.7" width="1.3" height="2.5"/><rect x="152.9" y="5.4" width="1.2" height="6.8"/><rect x="167.9" y="7.7" width="1.3" height="2.5"/><rect x="182.9" y="7.7" width="1.3" height="2.5"/><rect x="197.9" y="7.7" width="1.3" height="2.5"/><rect x="227.9" y="7.7" width="1.3" height="2.5"/><rect x="242.9" y="7.7" width="1.3" height="2.5"/><rect x="257.9" y="7.7" width="1.3" height="2.5"/><rect x="272.9" y="5.4" width="1.2" height="6.8"/><rect x="287.9" y="7.7" width="1.3" height="2.5"/><rect x="302.9" y="7.7" width="1.3" height="2.5"/><rect x="317.9" y="7.7" width="1.3" height="2.5"/><rect x="347.9" y="7.7" width="1.3" height="2.5"/><rect x="362.9" y="7.7" width="1.3" height="2.5"/><rect x="377.9" y="7.7" width="1.3" height="2.5"/><rect x="392.9" y="5.4" width="1.2" height="6.8"/><rect x="407.9" y="7.7" width="1.3" height="2.5"/><rect x="422.9" y="7.7" width="1.3" height="2.5"/><rect x="437.9" y="7.7" width="1.3" height="2.5"/><rect x="467.9" y="7.7" width="1.3" height="2.5"/><rect x="482.9" y="7.7" width="1.3" height="2.5"/><rect x="497.9" y="7.7" width="1.3" height="2.5"/><rect x="512.9" y="5.4" width="1.2" height="6.8"/><rect x="527.9" y="7.7" width="1.3" height="2.5"/><rect x="542.9" y="7.7" width="1.3" height="2.5"/><rect x="557.9" y="7.7" width="1.3" height="2.5"/><rect x="587.9" y="7.7" width="1.3" height="2.5"/><rect x="602.9" y="7.7" width="1.3" height="2.5"/><rect x="617.9" y="7.7" width="1.3" height="2.5"/><rect x="632.9" y="5.4" width="1.2" height="6.8"/><rect x="647.9" y="7.7" width="1.3" height="2.5"/><rect x="662.9" y="7.7" width="1.3" height="2.5"/><rect x="677.9" y="7.7" width="1.3" height="2.5"/><rect x="707.9" y="7.7" width="1.3" height="2.5"/><rect x="722.9" y="7.7" width="1.3" height="2.5"/><rect x="737.9" y="7.7" width="1.3" height="2.5"/><rect x="752.9" y="5.4" width="1.2" height="6.8"/><rect x="767.9" y="7.7" width="1.3" height="2.5"/><rect x="782.9" y="7.7" width="1.3" height="2.5"/><rect x="797.9" y="7.7" width="1.3" height="2.5"/><rect x="827.9" y="7.7" width="1.3" height="2.5"/><rect x="842.9" y="7.7" width="1.3" height="2.5"/><rect x="857.9" y="7.7" width="1.3" height="2.5"/><rect x="872.9" y="5.4" width="1.2" height="6.8"/><rect x="887.9" y="7.7" width="1.3" height="2.5"/><rect x="902.9" y="7.7" width="1.3" height="2.5"/><rect x="917.9" y="7.7" width="1.3" height="2.5"/><rect x="947.9" y="7.7" width="1.3" height="2.5"/><rect x="962.9" y="7.7" width="1.3" height="2.5"/><rect x="977.9" y="7.7" width="1.3" height="2.5"/><rect x="992.9" y="5.4" width="1.2" height="6.8"/><rect x="1007.9" y="7.7" width="1.3" height="2.5"/><rect x="1022.9" y="7.7" width="1.3" height="2.5"/><rect x="1037.9" y="7.7" width="1.3" height="2.5"/><rect x="1067.9" y="7.7" width="1.3" height="2.5"/><rect x="1082.9" y="7.7" width="1.3" height="2.5"/><rect x="1097.9" y="7.7" width="1.3" height="2.5"/></g></svg>
<span id="t36" style="left:90.60px;top:211.00px;font-size:12.6px;color:#444;font-weight:400;letter-spacing:0.000px;">1</span>
<span id="t37" style="left:1049.60px;top:211.00px;font-size:12.6px;color:#444;font-weight:400;letter-spacing:0.000px;">7</span>
<svg style="left:207px;top:204px;" width="13" height="30" viewBox="0 0 13 30"><g fill="#f4f4f4" stroke="#6a6a6a" stroke-width="1.1"><path d="M1.5 1.3 H11.5 V5.5 L6.5 10.5 L1.5 5.5 Z"/><path d="M6.5 13.5 L11.5 18.5 V23 H1.5 V18.5 Z"/><rect x="1.5" y="23" width="10" height="5.2"/></g></svg>
<svg style="left:987px;top:212px;" width="14" height="16" viewBox="0 0 14 16"><path d="M6.6 0.6 V5.2" stroke="#555" stroke-width="1.1"/><path d="M1.4 14.6 V10.4 L6.6 5.2 L11.8 10.4 V14.6 Z" fill="#fcfcfc" stroke="#666" stroke-width="1.1"/></svg>
<div style="left:94px;top:254px;width:1020px;height:414px;background:#fff;border:1px solid #c8c8c8;border-bottom:none;"></div>
<div style="left:6px;top:252px;width:17px;height:123px;background:#c6c6c6;"></div>
<div style="left:6px;top:375px;width:17px;height:292px;background:#fdfdfd;"></div>
<svg style="left:0px;top:0px;" width="30" height="695" viewBox="0 0 30 695"><g fill="#4a4a4a"><rect x="14.4" y="268.9" width="2.4" height="1.2"/><rect x="14.4" y="283.9" width="2.4" height="1.2"/><rect x="14.4" y="298.9" width="2.4" height="1.2"/><rect x="12" y="313.9" width="6.6" height="1.2"/><rect x="14.4" y="328.9" width="2.4" height="1.2"/><rect x="14.4" y="343.9" width="2.4" height="1.2"/><rect x="14.4" y="358.9" width="2.4" height="1.2"/><rect x="14.4" y="388.9" width="2.4" height="1.2"/><rect x="14.4" y="403.9" width="2.4" height="1.2"/><rect x="14.4" y="418.9" width="2.4" height="1.2"/><rect x="12" y="433.9" width="6.6" height="1.2"/><rect x="14.4" y="448.9" width="2.4" height="1.2"/><rect x="14.4" y="463.9" width="2.4" height="1.2"/><rect x="14.4" y="478.9" width="2.4" height="1.2"/><rect x="14.4" y="508.9" width="2.4" height="1.2"/><rect x="14.4" y="523.9" width="2.4" height="1.2"/><rect x="14.4" y="538.9" width="2.4" height="1.2"/><rect x="12" y="553.9" width="6.6" height="1.2"/><rect x="14.4" y="568.9" width="2.4" height="1.2"/><rect x="14.4" y="583.9" width="2.4" height="1.2"/><rect x="14.4" y="598.9" width="2.4" height="1.2"/><rect x="14.4" y="628.9" width="2.4" height="1.2"/><rect x="14.4" y="643.9" width="2.4" height="1.2"/><rect x="14.4" y="658.9" width="2.4" height="1.2"/></g></svg>
<span style="left:9.6px;top:248.5px;width:12.6px;height:12.6px;font-size:12.6px;color:#444;text-align:center;transform:rotate(-90deg);transform-origin:50% 50%;">1</span>
<span style="left:9.6px;top:488.3px;width:12.6px;height:12.6px;font-size:12.6px;color:#444;text-align:center;transform:rotate(-90deg);transform-origin:50% 50%;">1</span>
<span style="left:9.6px;top:608.3000000000001px;width:12.6px;height:12.6px;font-size:12.6px;color:#444;text-align:center;transform:rotate(-90deg);transform-origin:50% 50%;">2</span>
<div style="left:0px;top:0px;width:1px;height:695px;background:#75787d;"></div>
<div style="left:1198px;top:0px;width:1px;height:695px;background:#8d9096;"></div>
<div style="left:0px;top:0px;width:1199px;height:1px;background:#6d7fa3;"></div>
<div style="left:214px;top:184px;width:752px;height:456px;background:#f0f0f0;border:1px solid #a0a0a0;box-shadow:0 2px 10px 1px rgba(0,0,0,0.24),0 -1px 7px rgba(0,0,0,0.12),0 0 2px rgba(0,0,0,0.22);"></div>
<div style="left:215px;top:185px;width:750px;height:36px;background:#fff;"></div>
<span id="t38" style="left:224.00px;top:196.00px;font-size:15px;color:#a2a2a2;font-weight:400;letter-spacing:-0.137px;">Object</span>
<span id="t39" style="left:874.00px;top:196.00px;font-size:14px;color:#9a9a9a;font-weight:400;letter-spacing:0.000px;">?</span>
<svg style="left:928px;top:196px;" width="14" height="14" viewBox="0 0 14 14"><path d="M1 1 L13 13 M13 1 L1 13" stroke="#a0a0a0" stroke-width="1.1" fill="none"/></svg>
<div style="left:225px;top:233px;width:105px;height:1px;background:#dcdcdc;"></div>
<div style="left:224px;top:258px;width:730px;height:330px;background:#fff;border:1px solid #dcdcdc;"></div>
<span id="t40" style="left:238.00px;top:243.00px;font-size:13.4px;color:#111;font-weight:400;letter-spacing:0.000px;"><u>C</u></span>
<span id="t41" style="left:237.00px;top:274.00px;font-size:13.4px;color:#111;font-weight:400;letter-spacing:0.000px;">F</span>
<div style="left:238px;top:293px;width:12px;height:25px;background:#e4e4e4;border:1px solid #adadad;"></div>
<div style="left:238px;top:444px;width:464px;height:130px;border:1px solid #d6d6d6;"></div>
<div style="left:773px;top:547px;width:112px;height:28px;background:#e1e1e1;border:2px solid #0078d7;"></div>
<span id="t42" style="left:788.60px;top:555.00px;font-size:13.1px;color:#161616;font-weight:400;letter-spacing:-0.318px;">Change <u>I</u>con...</span>
<div style="left:716px;top:600px;width:112px;height:29px;background:#e1e1e1;border:1px solid #adadad;"></div>
<span id="t43" style="left:763.50px;top:609.00px;font-size:13.1px;color:#161616;font-weight:400;letter-spacing:-1.300px;">OK</span>
<div style="left:843px;top:600px;width:112px;height:29px;background:#e1e1e1;border:1px solid #adadad;"></div>
<span id="t44" style="left:880.40px;top:609.00px;font-size:13.1px;color:#161616;font-weight:400;letter-spacing:-0.650px;">Cancel</span>
<div style="left:242px;top:229px;width:696px;height:310px;background:#f0f0f0;border:1px solid #6f6f6f;box-shadow:0 3px 14px 2px rgba(0,0,0,0.31),0 0 3px rgba(0,0,0,0.3);"></div>
<div style="left:243px;top:230px;width:694px;height:37px;background:#fff;"></div>
<span id="t45" style="left:252.00px;top:241.00px;font-size:15px;color:#000;font-weight:400;letter-spacing:-0.302px;">Change Icon</span>
<span id="t46" style="left:846.50px;top:240.00px;font-size:15px;color:#000;font-weight:400;letter-spacing:0.000px;">?</span>
<svg style="left:900.4px;top:241px;" width="14" height="14" viewBox="0 0 14 14"><path d="M1 1 L13 13 M13 1 L1 13" stroke="#111" stroke-width="1.2" fill="none"/></svg>
<span id="t47" style="left:251.30px;top:285.00px;font-size:13.4px;color:#161616;font-weight:400;letter-spacing:-0.366px;">File name:</span>
<span style="left:324.70px;top:285.00px;font-size:13.4px;color:#161616;font-weight:400;"><i style="font-style:normal;letter-spacing:-0.261px;margin-left:0.00px">C:\...\Installer\</i><i style="font-style:normal;letter-spacing:-0.605px;margin-left:1.24px">{AC76BA86-1033-1033-7760-BC15014EA700}</i><i style="font-style:normal;letter-spacing:-0.644px;margin-left:1.85px">\_SC_Acrobat.ico</i></span>
<div style="left:815px;top:276px;width:112px;height:29px;background:#e1e1e1;border:1px solid #adadad;"></div>
<span id="t51" style="left:844.40px;top:284.00px;font-size:13.4px;color:#161616;font-weight:400;letter-spacing:-0.499px;"><u>B</u>rowse...</span>
<span id="t52" style="left:251.00px;top:320.00px;font-size:13.4px;color:#161616;font-weight:400;letter-spacing:-0.203px;"><u>I</u>con:</span>
<div style="left:324px;top:317px;width:111px;height:130px;background:#fff;border:1px solid #7a7a7a;"></div>
<div style="left:413px;top:318px;width:21px;height:128px;background:#f0f0f0;"></div>
<div style="left:326px;top:319px;width:86px;height:42px;background:#fff;border:1px dotted #222;"></div>
<div style="left:327px;top:320px;width:84px;height:40px;background:#0078d7;"></div>
<div style="left:352.5px;top:321.3px;width:36.5px;height:34.5px;background:#c51405;border-radius:5.5px;box-shadow:0 0.5px 2px rgba(0,0,20,0.55);"></div>
<svg style="left:352.5px;top:321.5px;" width="36.5" height="34.5" viewBox="0 0 36.5 34.5"><g fill="none" stroke="#fff" stroke-width="1.6" stroke-linecap="round" stroke-linejoin="round"><path d="M17.2 6.6 C15.4 9 16.6 15.4 15.6 18.6 C14.4 22 10.4 24.6 8.2 26.6 C7.4 24.2 11.6 20.6 16.4 19.4 C21 18.2 27.4 18.6 29.8 20.8 C27.6 22.8 22.8 21.6 20 19.2 C17.8 16.8 19.2 9 17.2 6.6 Z"/></g></svg>
<svg style="left:417px;top:326px;" width="12" height="8" viewBox="0 0 12 8"><path d="M1.4 6.4 L5.8 1.6 L10.2 6.4" fill="none" stroke="#bdbdbd" stroke-width="1.5"/></svg>
<svg style="left:417px;top:430px;" width="12" height="8" viewBox="0 0 12 8"><path d="M1.4 1.6 L5.8 6.4 L10.2 1.6" fill="none" stroke="#bdbdbd" stroke-width="1.5"/></svg>
<span id="t53" style="left:252.00px;top:465.00px;font-size:13.4px;color:#161616;font-weight:400;letter-spacing:-0.165px;"><u>C</u>aption:</span>
<div style="left:324px;top:458px;width:604px;height:26px;background:#fff;border:1px solid #8e8e8e;"></div>
<span id="t54" style="left:326.30px;top:464.00px;font-size:13.4px;color:#161616;font-weight:400;letter-spacing:-0.171px;">Please sign .pdf</span>
<div style="left:688px;top:499px;width:112px;height:29px;background:#e1e1e1;border:2px solid #0078d7;"></div>
<span id="t55" style="left:735.60px;top:508.00px;font-size:13.1px;color:#161616;font-weight:400;letter-spacing:-1.300px;">OK</span>
<div style="left:815px;top:499px;width:112px;height:29px;background:#e1e1e1;border:1px solid #adadad;"></div>
<span id="t56" style="left:852.40px;top:508.00px;font-size:13.1px;color:#161616;font-weight:400;letter-spacing:-0.690px;">Cancel</span>
<div style="left:0px;top:667px;width:1199px;height:28px;background:#f3f2f1;border-top:1px solid #c8c6c4;"></div>
<div style="left:0px;top:693px;width:1199px;height:1px;background:#c4c4c4;"></div>
<div style="left:0px;top:694px;width:1199px;height:1px;background:#808080;"></div>
<div style="left:0px;top:0px;width:1px;height:695px;background:#75787d;"></div>
<div style="left:1198px;top:0px;width:1px;height:695px;background:#8d9096;"></div>
<span id="t57" style="left:9.00px;top:675.00px;font-size:13.2px;color:#444;font-weight:400;letter-spacing:-0.012px;">Page 1 of 1</span>
<span id="t58" style="left:101.30px;top:675.00px;font-size:13.2px;color:#444;font-weight:400;letter-spacing:-0.031px;">10 words</span>
<span id="t59" style="left:176.70px;top:675.00px;font-size:13.2px;color:#444;font-weight:400;letter-spacing:-0.309px;">51 characters</span>
<svg style="left:277px;top:672.5px;" width="20" height="18" viewBox="0 0 20 18"><g fill="none" stroke="#444" stroke-width="1.4" stroke-linejoin="miter"><path d="M7.4 14.8 H2.2 V1.5 H17.3 V8.4"/><path d="M9 1.5 V11.6"/><path d="M8.3 12.6 L11.7 15.9 L18.2 10.1" stroke-linecap="round" stroke-linejoin="round"/></g></svg>
<svg style="left:321px;top:672.5px;" width="20" height="18" viewBox="0 0 20 18"><g fill="none" stroke="#444" stroke-width="1.4"><path d="M6.6 15.1 H2 V1.5 H18 V6.4"/><path d="M2 4.4 H18" stroke-width="1.3"/><path d="M4 7 H7.6 M4 9.6 H6 M4 12.2 H6" stroke-width="1.3"/><circle cx="13.3" cy="11.4" r="4.7"/></g><circle cx="13.3" cy="11.4" r="2.3" fill="#444"/></svg>
<svg style="left:608.5px;top:672px;" width="20" height="18" viewBox="0 0 20 18"><g fill="none" stroke="#444" stroke-width="1.3"><path d="M9 11.8 H1.6 V1.8 H17.4 V6"/><path d="M4.6 14.6 H8.6"/><circle cx="13.6" cy="11.6" r="3" /><path d="M13.6 6.8 V8.4 M13.6 14.8 V16.4 M8.8 11.6 H10.4 M16.8 11.6 H18.4 M10.2 8.2 L11.4 9.4 M15.8 13.8 L17 15 M17 8.2 L15.8 9.4 M11.4 13.8 L10.2 15" stroke-width="1.6"/></g></svg>
<span id="t60" style="left:629.60px;top:675.00px;font-size:13.2px;color:#444;font-weight:400;letter-spacing:-0.217px;">Display Settings</span>
<svg style="left:742px;top:671.6px;" width="20" height="18" viewBox="0 0 20 18"><g fill="none" stroke="#444" stroke-width="1.3"><path d="M1.6 5 V1.6 H5 M15 1.6 H18.4 V5 M18.4 13 V16.4 H15 M5 16.4 H1.6 V13"/><path d="M5.8 3.6 H11.4 L14.4 6.6 V14.4 H5.8 Z"/><path d="M11.4 3.6 V6.6 H14.4"/></g></svg>
<span id="t61" style="left:764.00px;top:675.00px;font-size:13.2px;color:#444;font-weight:400;letter-spacing:-0.879px;">Focus</span>
<svg style="left:827.5px;top:671.8px;" width="18" height="17" viewBox="0 0 18 17"><g fill="none" stroke="#444" stroke-width="1.2"><path d="M8.8 3 C6.6 1.6 4 1.4 1.6 1.8 V14 C4 13.6 6.6 13.8 8.8 15.4 C11 13.8 13.6 13.6 16 14 V1.8 C13.6 1.4 11 1.6 8.8 3 Z"/><path d="M8.8 3 V15.2"/><path d="M3.4 5 H7 M3.4 7.6 H7 M3.4 10.2 H7 M10.6 5 H14.2 M10.6 7.6 H14.2 M10.6 10.2 H14.2" stroke-width="1"/></g></svg>
<div style="left:862px;top:668px;width:50px;height:25px;background:#c8c8c8;"></div>
<svg style="left:879px;top:672px;" width="16" height="18" viewBox="0 0 16 18"><rect x="1.4" y="1.2" width="13" height="15.8" fill="#f3f2f1" stroke="#444" stroke-width="1.3"/><path d="M3.4 4.2 H12.4 M3.4 6.8 H12.4 M3.4 9.4 H12.4 M3.4 12 H12.4 M3.4 14.4 H12.4" stroke="#444" stroke-width="1.1"/></svg>
<svg style="left:927px;top:671.6px;" width="20" height="19" viewBox="0 0 20 19"><g fill="none" stroke="#444" stroke-width="1.2"><path d="M8 15.8 H1.8 V1.6 H15.8 V7"/><path d="M3.8 4.6 H13.8 M3.8 7.2 H9.4 M3.8 9.8 H7.6"/><circle cx="13.4" cy="12.4" r="5"/><ellipse cx="13.4" cy="12.4" rx="2.2" ry="5"/><path d="M8.4 12.4 H18.4 M9.2 10 H17.6 M9.2 14.8 H17.6"/></g></svg>
<div style="left:969.5px;top:680.2px;width:8.5px;height:1.1999999999999318px;background:#444;"></div>
<div style="left:985.5px;top:680.6px;width:124.5px;height:1.1000000000000227px;background:#5a5a5a;"></div>
<div style="left:1045px;top:674px;width:6px;height:13.600000000000023px;background:#3b3a39;"></div>
<div style="left:1116.4px;top:680.2px;width:8.599999999999909px;height:1.1999999999999318px;background:#444;"></div>
<div style="left:1120.1px;top:676.5px;width:1.2000000000000455px;height:8.600000000000023px;background:#444;"></div>
<span id="t62" style="left:1141.60px;top:675.00px;font-size:13.2px;color:#444;font-weight:400;letter-spacing:-0.868px;">100%</span>
</div></body></html>
